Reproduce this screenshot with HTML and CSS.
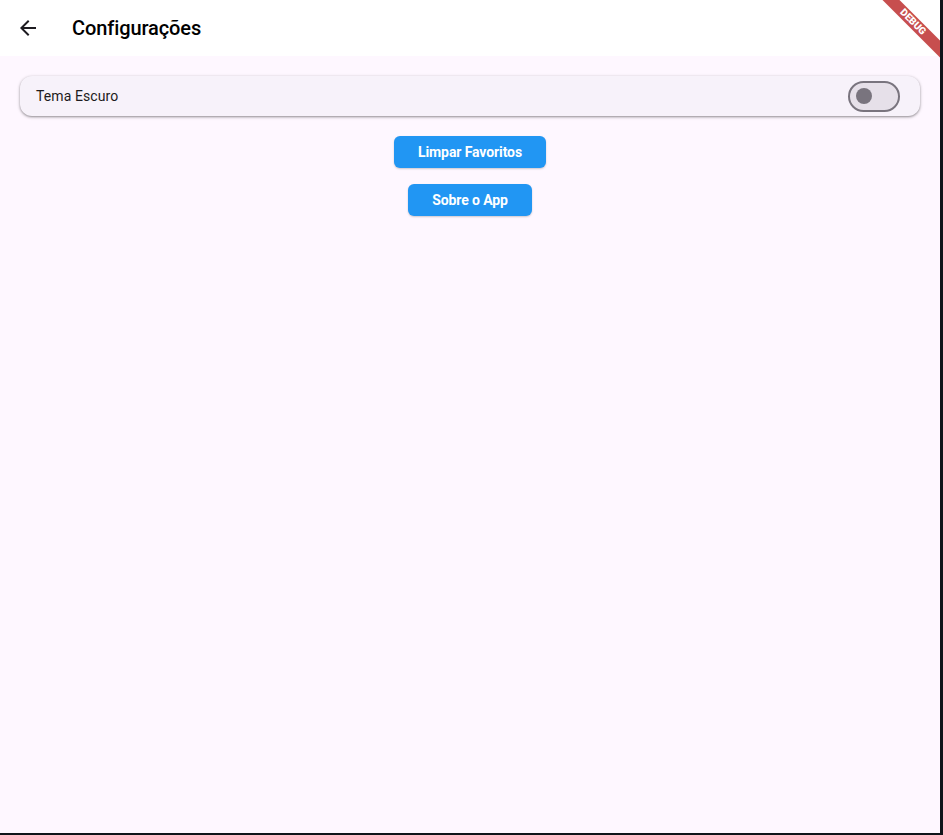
FILE: index.html
```html
<!DOCTYPE html>
<html lang="pt">
<head>
<meta charset="utf-8">
<link rel="stylesheet" href="styles.css">
</head>
<body>
<div class="app">
  <header class="appbar">
    <button class="back" aria-label="Voltar">
      <svg width="24" height="24" viewBox="0 0 24 24"><path d="M20 11H7.83l5.59-5.59L12 4l-8 8 8 8 1.41-1.41L7.83 13H20v-2z" fill="#1d1b20"/></svg>
    </button>
    <h1 class="title">Configurações</h1>
  </header>
  <main class="content">
    <div class="card">
      <span class="label">Tema Escuro</span>
      <span class="switch"><span class="thumb"></span></span>
    </div>
    <div class="actions">
      <button class="btn">Limpar Favoritos</button>
      <button class="btn">Sobre o App</button>
    </div>
  </main>
  <div class="debug"><span>DEBUG</span></div>
</div>
</body>
</html>
```
FILE: styles.css
```css
html, body {
  margin: 0;
  padding: 0;
  background: #0f141a;
  height: 100%;
}
body {
  font-family: Roboto, "Noto Sans", sans-serif;
}
.app {
  position: relative;
  width: 940px;
  height: 833px;
  background: #fef7ff;
  overflow: hidden;
}
.appbar {
  height: 56px;
  background: #ffffff;
  display: flex;
  align-items: center;
  padding: 0 16px;
  box-sizing: border-box;
}
.back {
  width: 24px;
  height: 24px;
  padding: 0;
  border: 0;
  background: none;
  display: flex;
}
.title {
  margin: 0 0 0 32px;
  font-size: 20px;
  font-weight: 500;
  color: #000;
  letter-spacing: -0.1px;
}
.content {
  padding: 20px;
  display: flex;
  flex-direction: column;
}
.card {
  height: 40px;
  background: #f7f2fa;
  border-radius: 12px;
  box-shadow: 0 1px 2px rgba(0,0,0,0.3), 0 1px 3px 1px rgba(0,0,0,0.12);
  display: flex;
  align-items: center;
  justify-content: space-between;
  padding: 0 20px 0 16px;
}
.label {
  font-size: 14px;
  color: #1d1b20;
  letter-spacing: 0.1px;
}
.switch {
  width: 52px;
  height: 31px;
  box-sizing: border-box;
  border: 2px solid #79747e;
  border-radius: 16px;
  background: #e6e0e9;
  display: flex;
  align-items: center;
  padding-left: 6px;
}
.thumb {
  width: 16px;
  height: 16px;
  border-radius: 50%;
  background: #79747e;
}
.actions {
  display: flex;
  flex-direction: column;
  align-items: center;
  gap: 16px;
  margin-top: 20px;
}
.btn {
  height: 32px;
  padding: 0 24px;
  border: 0;
  border-radius: 6px;
  background: #2196f3;
  color: #fff;
  font-family: Roboto, sans-serif;
  font-weight: 700;
  font-size: 14px;
  letter-spacing: -0.1px;
  box-shadow: 0 1px 2px rgba(0,0,0,0.2);
}
.debug {
  position: absolute;
  top: 0;
  right: 0;
  width: 80px;
  height: 80px;
  overflow: hidden;
}
.debug span {
  position: absolute;
  top: 16px;
  right: -23px;
  width: 100px;
  height: 12px;
  line-height: 12px;
  background: rgba(183, 28, 28, 0.78);
  color: #fff;
  font-size: 10px;
  font-weight: 900;
  text-align: center;
  transform: rotate(45deg);
  letter-spacing: 0;
}
```
